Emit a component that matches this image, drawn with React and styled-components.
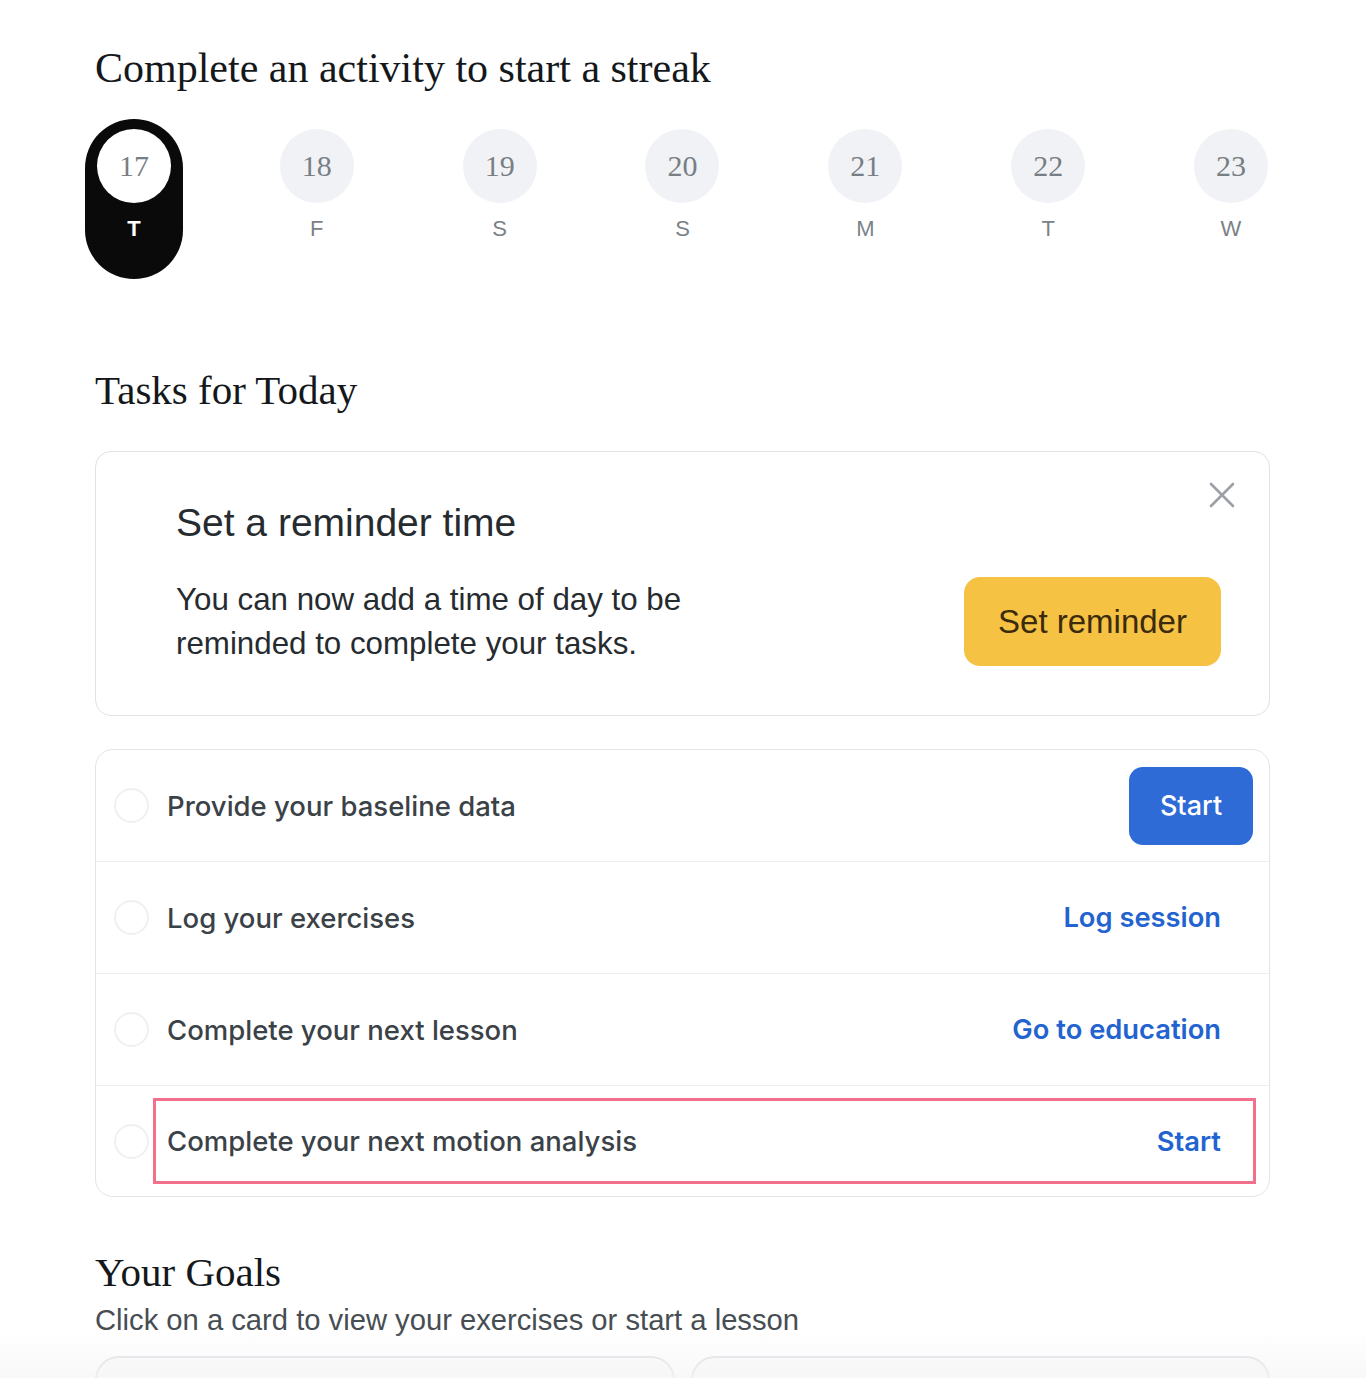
import React from 'react'
import styled, { createGlobalStyle } from 'styled-components'

const GlobalStyle = createGlobalStyle`
  html, body {
    margin: 0;
    padding: 0;
    background: #ffffff;
  }
  * {
    box-sizing: border-box;
  }
`

const Viewport = styled.div`
  position: relative;
  height: 1378px;
  overflow: hidden;
  background: #ffffff;
`
const Page = styled.div`
  padding: 46px 96px 0 95px;
`
const Heading = styled.h2`
  margin: 0;
  font-family: "Liberation Serif", "Times New Roman", serif;
  font-weight: 400;
  font-size: ${p => p.size || 41}px;
  line-height: 44px;
  color: #15181b;
`
const DayRow = styled.div`
  display: flex;
  justify-content: space-between;
  margin: 29px -10px 0 -10px;
`
const Day = styled.div`
  width: 98px;
  height: 160px;
  padding: 10px 12px 0 12px;
  border-radius: 49px;
  display: flex;
  flex-direction: column;
  align-items: center;
  background: ${p => (p.active ? '#0a0a0a' : 'transparent')};
`
const DayCircle = styled.div`
  width: 74px;
  height: 74px;
  border-radius: 50%;
  background: ${p => (p.active ? '#ffffff' : '#f0f2f6')};
  display: flex;
  align-items: center;
  justify-content: center;
  font-family: "Liberation Serif", "Times New Roman", serif;
  font-size: 30px;
  color: #787f84;
`
const DayLetter = styled.div`
  margin-top: 14px;
  font-family: "Liberation Sans", Arial, sans-serif;
  font-size: 22px;
  line-height: 24px;
  color: ${p => (p.active ? '#ffffff' : '#7b8287')};
  font-weight: ${p => (p.active ? 700 : 400)};
`
const TasksHeading = styled(Heading)`
  margin-top: 89px;
`
const ReminderCard = styled.div`
  position: relative;
  margin-top: 39px;
  border: 1.5px solid #dfe2e6;
  border-radius: 16px;
  padding: 49px 48px 49px 80px;
  font-family: "Liberation Sans", Arial, sans-serif;
`
const ReminderTitle = styled.div`
  font-size: 39px;
  line-height: 44px;
  color: #262b2f;
`
const ReminderRow = styled.div`
  margin-top: 32px;
  display: flex;
  align-items: center;
  justify-content: space-between;
`
const ReminderText = styled.div`
  font-size: 31.3px;
  line-height: 44px;
  color: #262b2f;
`
const ReminderButton = styled.button`
  width: 257px;
  height: 89px;
  border: none;
  border-radius: 16px;
  background: #f5c244;
  color: #3b2b0c;
  font-family: "Liberation Sans", Arial, sans-serif;
  font-size: 33px;
  padding: 0;
`
const CloseButton = styled.button`
  position: absolute;
  top: 29px;
  right: 33px;
  width: 28px;
  height: 28px;
  padding: 0;
  border: none;
  background: none;
  svg {
    display: block;
  }
`
const TaskCard = styled.div`
  margin-top: 33px;
  border: 1.5px solid #e1e4e8;
  border-radius: 18px;
`
const TaskRow = styled.div`
  position: relative;
  height: ${p => (p.last ? 110 : 112)}px;
  display: flex;
  align-items: center;
  padding: 0 16px 0 18px;
  border-bottom: ${p => (p.last ? 'none' : '1.5px solid #eceef1')};
`
const Radio = styled.span`
  width: 35px;
  height: 35px;
  border-radius: 50%;
  border: 2px solid #eef0f3;
  flex-shrink: 0;
`
const TaskLabel = styled.span`
  flex: 1;
  margin-left: 18px;
  font-family: Inter, "Liberation Sans", sans-serif;
  font-weight: 500;
  font-size: 27.5px;
  color: #3b4247;
`
const SolidAction = styled.button`
  width: 124px;
  height: 78px;
  border: none;
  border-radius: 14px;
  background: #2e6bd6;
  color: #ffffff;
  font-family: Inter, "Liberation Sans", sans-serif;
  font-weight: 500;
  font-size: 27px;
  padding: 0;
`
const LinkAction = styled.a`
  margin-right: 32px;
  font-family: Inter, "Liberation Sans", sans-serif;
  font-weight: 600;
  font-size: 27.3px;
  color: #2363d0;
  text-decoration: none;
`
const Highlight = styled.div`
  position: absolute;
  left: 57px;
  right: 13px;
  top: 12px;
  height: 86px;
  border: 3px solid #f2708c;
  pointer-events: none;
`
const GoalsHeading = styled(Heading)`
  margin-top: 53px;
`
const GoalsSub = styled.div`
  margin-top: 8px;
  font-family: "Liberation Sans", Arial, sans-serif;
  font-size: 29.2px;
  line-height: 36px;
  color: #474e53;
`
const GoalGrid = styled.div`
  margin-top: 18px;
  display: grid;
  grid-template-columns: 1fr 1fr;
  gap: 16px;
`
const GoalCard = styled.div`
  height: 200px;
  border: 2px solid #dcdfe4;
  border-radius: 24px;
  background: #fbfbfb;
`
const BottomFade = styled.div`
  position: absolute;
  left: 0;
  right: 0;
  bottom: 0;
  height: 48px;
  background: linear-gradient(to bottom, rgba(245, 245, 245, 0), rgba(245, 245, 245, 0.7));
  pointer-events: none;
`

const days = [
  { n: 17, d: 'T', active: true },
  { n: 18, d: 'F' },
  { n: 19, d: 'S' },
  { n: 20, d: 'S' },
  { n: 21, d: 'M' },
  { n: 22, d: 'T' },
  { n: 23, d: 'W' },
]

const tasks = [
  { label: 'Provide your baseline data', action: 'Start', solid: true },
  { label: 'Log your exercises', action: 'Log session' },
  { label: 'Complete your next lesson', action: 'Go to education' },
  { label: 'Complete your next motion analysis', action: 'Start', highlight: true },
]

export default function App() {
  return (
    <Viewport>
      <GlobalStyle />
      <Page>
        <Heading size={42}>Complete an activity to start a streak</Heading>
        <DayRow>
          {days.map(day => (
            <Day key={day.n} active={day.active}>
              <DayCircle active={day.active}>{day.n}</DayCircle>
              <DayLetter active={day.active}>{day.d}</DayLetter>
            </Day>
          ))}
        </DayRow>

        <TasksHeading>Tasks for Today</TasksHeading>
        <ReminderCard>
          <CloseButton aria-label="Close">
            <svg width="28" height="28" viewBox="0 0 28 28" fill="none">
              <path d="M3 3L25 25M25 3L3 25" stroke="#9aa0a6" strokeWidth="2.6" strokeLinecap="round" />
            </svg>
          </CloseButton>
          <ReminderTitle>Set a reminder time</ReminderTitle>
          <ReminderRow>
            <ReminderText>
              You can now add a time of day to be
              <br />
              reminded to complete your tasks.
            </ReminderText>
            <ReminderButton>Set reminder</ReminderButton>
          </ReminderRow>
        </ReminderCard>

        <TaskCard>
          {tasks.map((t, i) => (
            <TaskRow key={t.label} last={i === tasks.length - 1}>
              <Radio />
              <TaskLabel>{t.label}</TaskLabel>
              {t.solid ? <SolidAction>{t.action}</SolidAction> : <LinkAction href="#">{t.action}</LinkAction>}
              {t.highlight && <Highlight />}
            </TaskRow>
          ))}
        </TaskCard>

        <GoalsHeading>Your Goals</GoalsHeading>
        <GoalsSub>Click on a card to view your exercises or start a lesson</GoalsSub>
        <GoalGrid>
          <GoalCard />
          <GoalCard />
        </GoalGrid>
      </Page>
      <BottomFade />
    </Viewport>
  )
}
